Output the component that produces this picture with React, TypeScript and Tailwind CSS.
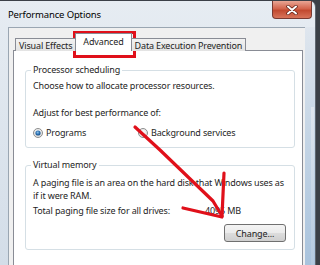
import React from "react";

function Radio({ checked }: { checked?: boolean }) {
  return (
    <svg width="10" height="10" viewBox="0 0 10 10" className="shrink-0">
      <defs>
        <radialGradient id={checked ? "rg-on" : "rg-off"} cx="50%" cy="40%" r="60%">
          <stop offset="0%" stopColor="#ffffff" />
          <stop offset="100%" stopColor="#dcdcdc" />
        </radialGradient>
        <radialGradient id="dot" cx="45%" cy="40%" r="60%">
          <stop offset="0%" stopColor="#8fc3ec" />
          <stop offset="60%" stopColor="#2a6fb0" />
          <stop offset="100%" stopColor="#1b4f85" />
        </radialGradient>
      </defs>
      <circle cx="5" cy="5" r="4.5" fill={`url(#${checked ? "rg-on" : "rg-off"})`} stroke="#8e8f8f" strokeWidth="1" />
      {checked && <circle cx="5" cy="5" r="2.6" fill="url(#dot)" />}
    </svg>
  );
}

function GroupBox({ title, className, children }: { title: string; className?: string; children: React.ReactNode }) {
  return (
    <div className={`relative rounded-[3px] border border-[#d5dfe5] ${className ?? ""}`}>
      <span className="absolute -top-[8px] left-[5px] bg-white px-[2px] leading-[14px]">{title}</span>
      {children}
    </div>
  );
}

export default function App() {
  return (
    <div className="relative h-[265px] w-[320px] overflow-hidden bg-[#3b4047] font-['Noto_Sans',sans-serif] text-[9px] tracking-[-0.15px] text-[#1e1e1e]">
      <div className="ml-0 mt-[1px] flex h-[264px] w-[316px] flex-col rounded-tr-[6px] border-r border-[#5f6770] bg-[linear-gradient(to_bottom,#e6ecf2,#d3dde8)]">
        {/* title bar */}
        <div className="flex h-[26px] shrink-0 items-start">
          <span className="ml-[8px] mt-[7px] text-[9.5px] leading-[14px] text-black">Performance Options</span>
          <div className="ml-auto mr-[3px] flex h-[18px] w-[40px] items-center justify-center rounded-b-[4px] border border-t-0 border-[#7a3a31] bg-[linear-gradient(to_bottom,#e9a695,#d3644c_45%,#c24a30_55%,#d8745a)]">
            <svg width="12" height="10" viewBox="0 0 12 10">
              <path d="M2 1.5 L10 8.5 M10 1.5 L2 8.5" stroke="#5a1c12" strokeWidth="3.4" strokeLinecap="round" />
              <path d="M2 1.5 L10 8.5 M10 1.5 L2 8.5" stroke="#ffffff" strokeWidth="2" strokeLinecap="round" />
            </svg>
          </div>
        </div>

        {/* body */}
        <div className="flex min-h-0 flex-1">
          <div className="w-[8px] shrink-0" />
          <div className="min-w-0 flex-1 border-l border-t border-[#9aa6b2] bg-[#f0f0f0] pl-[4px] pr-[2px] pt-[6px]">
            {/* tabs */}
            <div className="relative z-10 flex h-[17px] items-end pl-[2px]">
              <div className="-mr-[1px] flex h-[13px] items-center border border-b-0 border-[#898c95] bg-[linear-gradient(to_bottom,#f2f2f2,#e3e3e3)] px-[3px] leading-none">
                Visual Effects
              </div>
              <div className="flex h-[18px] items-center border border-b-0 border-[#898c95] bg-white px-[7px] pb-[3px] leading-none">
                Advanced
              </div>
              <div className="-ml-[1px] flex h-[13px] items-center border border-b-0 border-[#898c95] bg-[linear-gradient(to_bottom,#f2f2f2,#e3e3e3)] px-[3px] leading-none">
                Data Execution Prevention
              </div>
            </div>
            <div className="-mt-[1px] h-[240px] border border-[#898c95] bg-white pl-[11px] pr-[7px] pt-[19px]">
              <GroupBox title="Processor scheduling" className="pb-[8px] pl-[7px] pt-[8px]">
                <div className="leading-[13px]">Choose how to allocate processor resources.</div>
                <div className="mt-[14px] leading-[13px]">Adjust for best performance of:</div>
                <div className="mt-[7px] flex items-center leading-[13px]">
                  <Radio checked />
                  <span className="ml-[3px] w-[92px]">Programs</span>
                  <Radio />
                  <span className="ml-[3px]">Background services</span>
                </div>
              </GroupBox>
              <GroupBox title="Virtual memory" className="mt-[17px] pb-[7px] pl-[7px] pr-[8px] pt-[10px]">
                <div className="leading-[13px]">
                  A paging file is an area on the hard disk that Windows uses as
                  <br />
                  if it were RAM.
                </div>
                <div className="mt-[2px] flex leading-[13px]">
                  <span className="w-[172px]">Total paging file size for all drives:</span>
                  <span>4095 MB</span>
                </div>
                <div className="mt-[7px] flex justify-end">
                  <button className="flex h-[18px] w-[62px] items-center justify-center rounded-[3px] border border-[#707070] bg-[linear-gradient(to_bottom,#f4f4f4,#ebebeb_50%,#dddddd_51%,#cfcfcf)] leading-none text-[#1e1e1e]">
                    Change...
                  </button>
                </div>
              </GroupBox>
            </div>
          </div>
          <div className="w-[10px] shrink-0 bg-[linear-gradient(to_bottom,#dfe6ee,#c8d7e6_40%,#a9c3dd)]">
            <div className="ml-[6px] mt-[80px] h-full w-[3px] bg-[linear-gradient(to_bottom,#dfe6ee,#9dbbd8)]" />
          </div>
        </div>
      </div>

      {/* red markup drawn on the screenshot */}
      <div className="absolute left-[73px] top-[31px] h-[27px] w-[63px] border-[3px] border-[#e0101a]" />
      <svg className="pointer-events-none absolute left-0 top-0" width="320" height="265" viewBox="0 0 320 265">
        <path d="M135 127 L160 150 L213 201 L222 216" fill="none" stroke="#e0101a" strokeWidth="3.2" strokeLinecap="round" strokeLinejoin="round" />
        <path d="M224 173 L222 216" fill="none" stroke="#e0101a" strokeWidth="3.2" strokeLinecap="round" />
        <path d="M183 208 L222 217" fill="none" stroke="#e0101a" strokeWidth="3.2" strokeLinecap="round" />
      </svg>
    </div>
  );
}
